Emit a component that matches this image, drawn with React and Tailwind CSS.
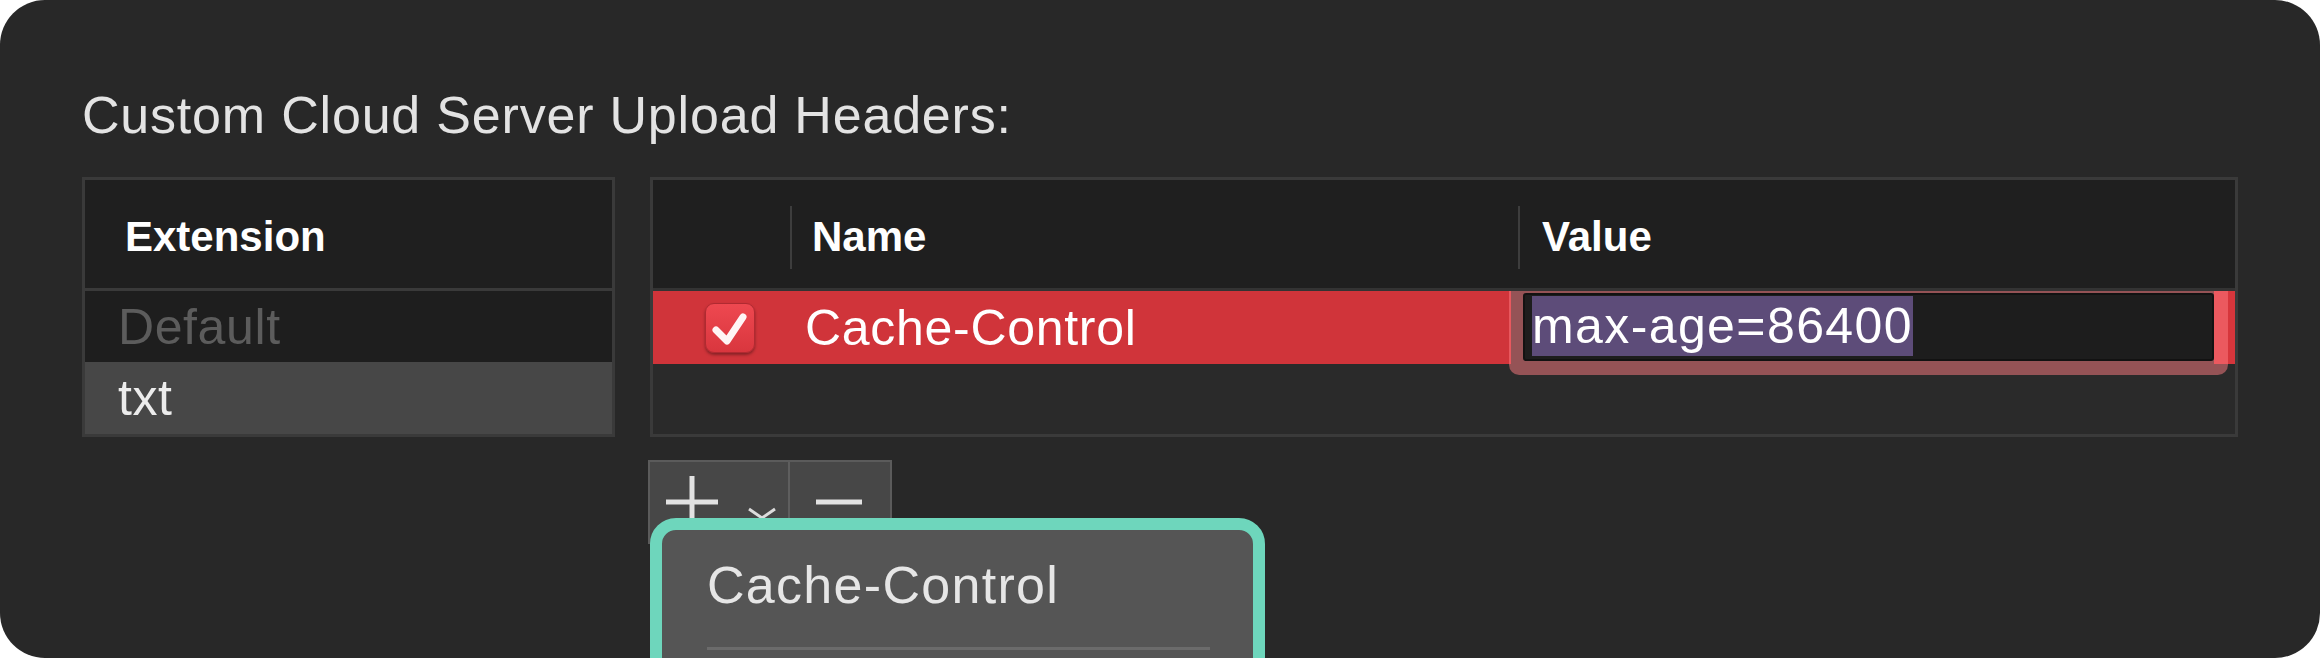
const CheckBox = () => {
  return (
    <div className="w-[50px] h-[50px] rounded-[9px] border border-[#b02a31] bg-gradient-to-b from-[#ee4850] to-[#d9363e] shadow-[0_2px_3px_rgba(0,0,0,0.35)]">
      <svg width="48" height="48" viewBox="0 0 48 48" fill="none">
        <path d="M10 26 L21 37 L37 13" stroke="#fff5f5" strokeWidth="7" strokeLinecap="round" strokeLinejoin="round" />
      </svg>
    </div>
  );
};

const AddRemoveButtons = () => {
  return (
    <div className="ml-[566px] mt-[23px] flex h-[84px] w-[244px] border-2 border-[#5b5b5b] bg-[#474747]">
      {/* Add with dropdown chevron */}
      <div className="flex w-[140px] items-start border-r-2 border-[#5e5e5e] pl-[15px] pt-[13px]">
        <svg width="54" height="54" viewBox="0 0 54 54" fill="none">
          <path d="M1 27 H53 M27 1 V53" stroke="#e2e2e2" strokeWidth="5" />
        </svg>
        <svg className="ml-[28px] mt-[32px]" width="30" height="13" viewBox="0 0 30 13" fill="none">
          <path d="M2 2 L15 11 L28 2" stroke="#dcdcdc" strokeWidth="3" />
        </svg>
      </div>
      {/* Remove */}
      <div className="flex-1 pl-[26px] pt-[35px]">
        <svg width="46" height="10" viewBox="0 0 46 10" fill="none">
          <path d="M0 5 H46" stroke="#e2e2e2" strokeWidth="5" />
        </svg>
      </div>
    </div>
  );
};

export default function App() {
  return (
    <div className="h-[658px] w-[2320px] bg-white font-['Liberation_Sans',Arial,sans-serif]">
      <div className="relative h-full overflow-hidden rounded-[45px] bg-[#282828] pl-[82px] pt-[89px]">
        <h1 className="text-[52px] font-normal leading-none tracking-[0.8px] text-[#e3e3e3]">
          Custom Cloud Server Upload Headers:
        </h1>

        <div className="mt-[36px] flex gap-[35px]">
          {/* Extension list */}
          <div className="flex h-[260px] w-[533px] flex-col border-[3px] border-[#3a3a3a]">
            <div className="flex h-[111px] items-center border-b-[3px] border-[#3a3a3a] bg-[#1f1f1f] pl-[40px] pt-[6px] text-[42px] font-bold leading-none text-white">
              Extension
            </div>
            <div className="flex h-[71px] items-center bg-[#1e1e1e] pl-[33px] text-[50px] leading-none tracking-[0.6px] text-[#5c5c5c]">
              Default
            </div>
            <div className="flex h-[72px] items-center bg-[#474747] pl-[33px] text-[50px] leading-none tracking-[0.6px] text-[#ececec]">
              txt
            </div>
          </div>

          {/* Headers table */}
          <div className="flex h-[260px] w-[1588px] flex-col border-[3px] border-[#3a3a3a]">
            <div className="relative z-10 flex h-[111px] items-center border-b-[3px] border-[#333333] bg-[#1f1f1f] pt-[6px] text-[42px] font-bold leading-none text-white">
              <div className="w-[137px]" />
              <div className="h-[63px] w-[2px] bg-[#3d3d3d]" />
              <div className="w-[726px] pl-[20px]">Name</div>
              <div className="h-[63px] w-[2px] bg-[#3d3d3d]" />
              <div className="pl-[22px]">Value</div>
            </div>

            <div className="flex h-[73px]">
              <div className="flex w-[858px] items-center bg-[#d0343a]">
                <div className="w-[137px] pl-[52px]">
                  <CheckBox />
                </div>
                <div className="pl-[15px] text-[50px] leading-none tracking-[0.7px] text-white">Cache-Control</div>
              </div>
              <div className="w-[703px] bg-[#2a2a2a] pb-[3px] pl-[12px] pt-[2px]">
                <div className="relative h-full rounded-[3px] border-2 border-[#121212] bg-[#1d1d1d] pl-[7px] pt-[1px] shadow-[0_0_0_14px_rgba(255,124,130,0.5)]">
                  <span className="inline-block h-[60px] bg-[#5d4c79] text-[50px] leading-[60px] tracking-[1.4px] text-white">
                    max-age=86400
                  </span>
                </div>
              </div>
              <div className="flex-1 bg-[#d6363c]" />
            </div>

            <div className="flex-1 bg-[#2a2a2a]" />
          </div>
        </div>

        <AddRemoveButtons />

        {/* Popup menu */}
        <div className="absolute left-[650px] top-[518px] h-[320px] w-[615px] rounded-[26px] border-[12px] border-[#6ed6bc] bg-[#555555] pl-[45px] pr-[43px] pt-[29px]">
          <div className="text-[52px] leading-none tracking-[1.3px] text-[#e6e6e6]">Cache-Control</div>
          <div className="mt-[36px] h-[3px] bg-[#6b6b6b]" />
        </div>
      </div>
    </div>
  );
}
